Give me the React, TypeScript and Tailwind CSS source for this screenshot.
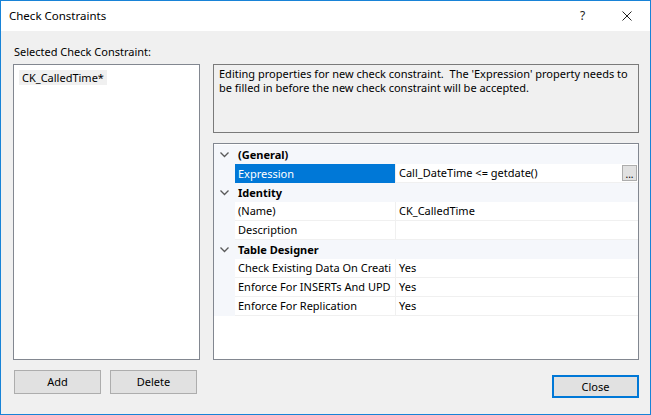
const ROWS: { kind: "cat" | "item"; name: string; value?: string; selected?: boolean; button?: boolean }[] = [
  { kind: "cat", name: "(General)" },
  { kind: "item", name: "Expression", value: "Call_DateTime <= getdate()", selected: true, button: true },
  { kind: "cat", name: "Identity" },
  { kind: "item", name: "(Name)", value: "CK_CalledTime" },
  { kind: "item", name: "Description", value: "" },
  { kind: "cat", name: "Table Designer" },
  { kind: "item", name: "Check Existing Data On Creati", value: "Yes" },
  { kind: "item", name: "Enforce For INSERTs And UPD", value: "Yes" },
  { kind: "item", name: "Enforce For Replication", value: "Yes" },
];

function Chevron() {
  return (
    <svg width="9" height="6" viewBox="0 0 9 6" className="block">
      <path d="M0.5 0.5 L4.5 4.5 L8.5 0.5" fill="none" stroke="#5a5a5a" strokeWidth="1.3" />
    </svg>
  );
}

function PropertyGrid() {
  return (
    <div className="flex-1 border border-[#828790] bg-white pt-px">
      {ROWS.map((r) =>
        r.kind === "cat" ? (
          <div key={r.name} className="flex h-[19px] bg-[#f5f7fb]">
            <div className="flex w-[21px] shrink-0 items-center justify-center">
              <Chevron />
            </div>
            <div className="flex items-center pl-[3px] font-bold text-black">{r.name}</div>
          </div>
        ) : (
          <div key={r.name} className="flex h-[19px]">
            <div className="w-[21px] shrink-0 bg-[#f5f7fb]" />
            <div
              className={
                r.selected
                  ? "flex w-[160px] shrink-0 items-center overflow-hidden whitespace-nowrap bg-[#0078d7] pl-[3px] text-white"
                  : "flex w-[160px] shrink-0 items-center overflow-hidden whitespace-nowrap border-b border-[#f0f0f0] bg-white pl-[3px] text-black"
              }
            >
              {r.name}
            </div>
            <div className="flex flex-1 items-center border-b border-l border-[#f0f0f0] bg-white pl-[3px] pr-px text-black">
              <span className="flex-1 whitespace-nowrap">{r.value}</span>
              {r.button && (
                <div className="flex h-[16px] w-[15px] items-end justify-center border border-[#adadad] bg-[#e1e1e1] pb-[1px] text-[10px] leading-[10px] text-black">
                  ...
                </div>
              )}
            </div>
          </div>
        )
      )}
    </div>
  );
}

function Button({ label, primary }: { label: string; primary?: boolean }) {
  return (
    <button
      className={
        primary
          ? "flex h-[23px] w-[87px] items-center justify-center border-2 border-[#0078d7] bg-[#e1e1e1] text-black"
          : "flex h-[24px] w-[87px] items-center justify-center border border-[#adadad] bg-[#e1e1e1] text-black"
      }
    >
      {label}
    </button>
  );
}

export default function App() {
  return (
    <div className="flex h-[415px] w-[651px] flex-col border border-[#1883d7] bg-[#f0f0f0] font-['Noto_Sans',sans-serif] text-[11px] leading-[16px] text-black">
      <div className="flex h-[30px] shrink-0 items-center bg-white pl-2">
        <span className="flex-1 text-[11.5px]">Check Constraints</span>
        <span className="w-[6px] text-[12px] text-[#222]">?</span>
        <div className="ml-[36px] mr-[18px] flex w-[10px] justify-center">
          <svg width="10" height="10" viewBox="0 0 10 10">
            <path d="M0.5 0.5 L9.5 9.5 M9.5 0.5 L0.5 9.5" stroke="#222" strokeWidth="1" />
          </svg>
        </div>
      </div>

      <div className="flex flex-1 flex-col pl-3 pr-[11px] pt-[13px]">
        <div className="h-[16px] pl-px">Selected Check Constraint:</div>
        <div className="mt-[4px] flex h-[296px] gap-[13px]">
          <div className="w-[187px] shrink-0 border border-[#828790] bg-white px-[5px] pt-[5px]">
            <span className="inline-block bg-[#f0f0f0] px-[3px] leading-[15px]">CK_CalledTime*</span>
          </div>
          <div className="flex flex-1 flex-col gap-[10px]">
            <div className="h-[69px] border border-[#7a7a7a] bg-[#f0f0f0] px-[5px] pt-[2px] leading-[14px]">
              Editing properties for new check constraint.&nbsp; The 'Expression' property needs to be filled in before the new check constraint will be accepted.
            </div>
            <PropertyGrid />
          </div>
        </div>
        <div className="mt-[9px] flex">
          <div className="flex gap-[9px] pl-[1px] pt-px">
            <Button label="Add" />
            <Button label="Delete" />
          </div>
          <div className="flex-1" />
          <div className="pt-[6px]">
            <Button label="Close" primary />
          </div>
        </div>
      </div>
    </div>
  );
}
